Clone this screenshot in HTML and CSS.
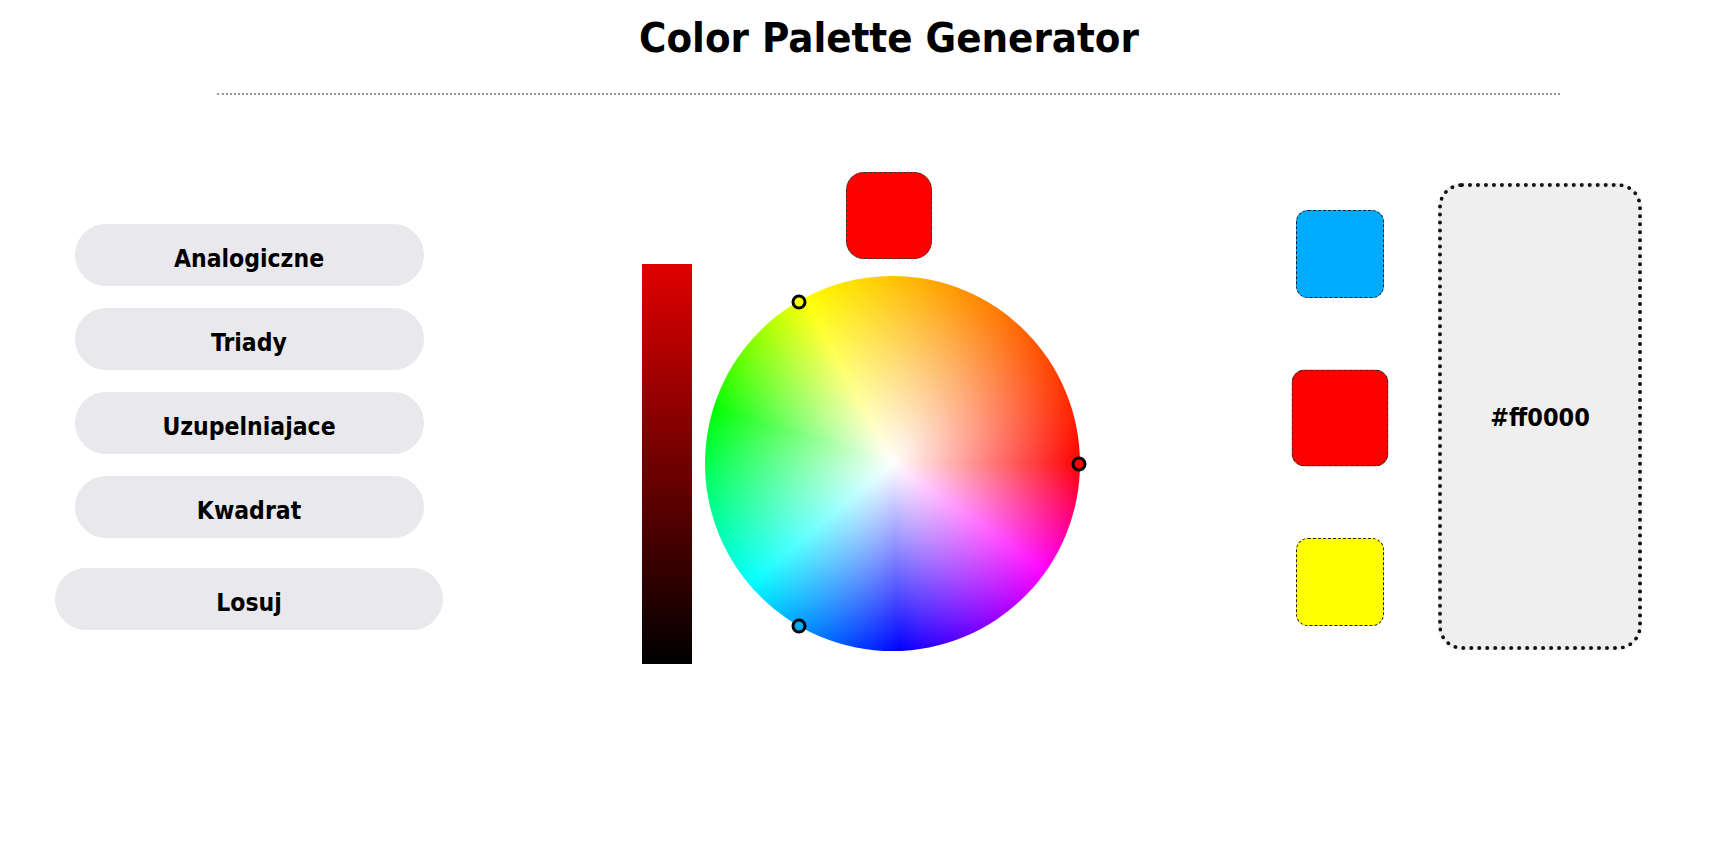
FILE: index.html
```html
<!DOCTYPE html>
<html lang="pl">
<head>
<meta charset="utf-8">
<title>Color Palette Generator</title>
<link rel="stylesheet" href="styles.css">
</head>
<body>
  <header class="header">
    <h1 class="title">Color Palette Generator</h1>
    <hr class="divider">
  </header>
  <main class="main">
    <nav class="modes">
      <button class="mode-btn">Analogiczne</button>
      <button class="mode-btn">Triady</button>
      <button class="mode-btn">Uzupelniajace</button>
      <button class="mode-btn">Kwadrat</button>
      <button class="mode-btn random-btn">Losuj</button>
    </nav>
    <section class="picker">
      <div class="brightness"></div>
      <div class="wheel-col">
        <div class="main-swatch"></div>
        <div class="wheel">
          <span class="marker marker-red"></span>
          <span class="marker marker-yellow"></span>
          <span class="marker marker-blue"></span>
        </div>
      </div>
    </section>
    <section class="palette">
      <div class="swatch swatch-blue"></div>
      <div class="swatch swatch-red selected"></div>
      <div class="swatch swatch-yellow"></div>
    </section>
    <aside class="hex-box">
      <span class="hex-text">#ff0000</span>
    </aside>
  </main>
</body>
</html>
```
FILE: styles.css
```css
html, body {
  margin: 0;
  padding: 0;
  background: #ffffff;
}

body {
  font-family: "DejaVu Sans Condensed", "DejaVu Sans", sans-serif;
  font-stretch: condensed;
  font-weight: bold;
  color: #000;
  width: 1717px;
  height: 866px;
  overflow: hidden;
}

.header {
  display: flex;
  flex-direction: column;
}

.title {
  margin: 14px 0 0 61px;
  font-size: 41.5px;
  line-height: 48px;
  text-align: center;
  font-weight: bold;
}

.divider {
  border: 0;
  border-top: 2px dotted #9a9a9a;
  height: 0;
  margin: 31px 157px 0 217px;
}

.main {
  display: flex;
  align-items: flex-start;
}

.modes {
  margin: 129px 0 0 55px;
  width: 388px;
  display: flex;
  flex-direction: column;
  align-items: center;
  gap: 22px;
}

.mode-btn {
  width: 349px;
  height: 62px;
  border: 0;
  border-radius: 31px;
  background: #e8e8ed;
  font-family: inherit;
  font-stretch: condensed;
  font-weight: bold;
  font-size: 24.5px;
  color: #000;
  padding: 6px 0 0;
}

.random-btn {
  width: 388px;
  margin-top: 8px;
}

.picker {
  display: flex;
  margin-left: 199px;
}

.brightness {
  width: 50px;
  height: 400px;
  margin-top: 169px;
  background: linear-gradient(#e00000, #000000);
}

.wheel-col {
  margin: 77px 0 0 13px;
  width: 375px;
  display: flex;
  flex-direction: column;
  align-items: center;
}

.main-swatch {
  width: 86px;
  height: 87px;
  box-sizing: border-box;
  border: 1px dashed #333;
  border-radius: 18px;
  background: #ff0000;
  margin: 0 7px 17px 0;
}

.wheel {
  position: relative;
  width: 375px;
  height: 375px;
  border-radius: 50%;
  background:
    radial-gradient(closest-side, #ffffff 0%, rgba(255,255,255,0.5) 50%, rgba(255,255,255,0) 100%),
    conic-gradient(#ffc300 0deg, #ff0000 90deg, #ff00ff 125deg, #0000ff 178deg, #00ffff 230deg, #00ff00 287deg, #ffff00 332deg, #ffc300 360deg);
}

.marker {
  position: absolute;
  width: 9px;
  height: 9px;
  border: 3px solid #000;
  border-radius: 50%;
  transform: translate(-50%, -50%);
}

.marker-red {
  left: 374px;
  top: 188px;
  background: #ff0000;
}

.marker-yellow {
  left: 94px;
  top: 26px;
  background: #ffff00;
}

.marker-blue {
  left: 94px;
  top: 350px;
  background: #00aaff;
}

.palette {
  margin: 115px 0 0 216px;
  display: flex;
  flex-direction: column;
  gap: 76px;
}

.swatch {
  width: 88px;
  height: 88px;
  box-sizing: border-box;
  border: 1px dashed #222;
  border-radius: 12px;
}

.swatch-blue { background: #00aaff; }
.swatch-red { background: #ff0000; }
.swatch-yellow { background: #ffff00; }

.selected {
  transform: scale(1.1);
}

.hex-box {
  margin: 88px 0 0 54px;
  width: 204px;
  height: 467px;
  box-sizing: border-box;
  border: 4px dotted #111;
  border-radius: 24px;
  background: #efefef;
  display: flex;
  align-items: center;
  justify-content: center;
}

.hex-text {
  font-size: 25px;
  padding-top: 2px;
}
```
